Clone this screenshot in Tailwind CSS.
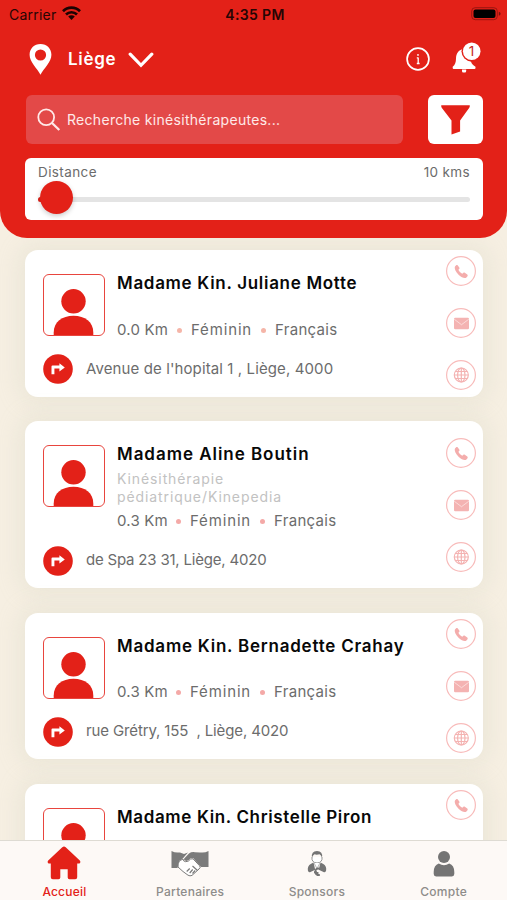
<!DOCTYPE html>
<html lang="fr">
<head>
<meta charset="utf-8">
<title>Kinésithérapeutes</title>
<script src="https://cdn.jsdelivr.net/npm/@tailwindcss/browser@4"></script>
</head>
<body class="bg-[#f6efe2]">
<svg class="hidden">
  <symbol id="person" viewBox="0 0 60 60"><circle cx="29.500" cy="26.300" r="12.200" fill="#e32118"/><path d="M9.700 60v-2.500C9.700 47 18 40.800 29.500 40.800S49.300 47 49.300 57.500V60z" fill="#e32118"/></symbol>
  <symbol id="turn" viewBox="0 0 30 30"><circle cx="15" cy="15" r="14.800" fill="#e32118"/><path d="M8.500 20.300v-7.700q0-1 1-1h6.900V9.200l5.400 4.200-5.400 4.200v-3h-5v5.700z" fill="#fff"/></symbol>
  <symbol id="phone" viewBox="0 0 30 30"><circle cx="15" cy="15" r="14.400" fill="none" stroke="#f8bcbb" stroke-width="1.200"/><path d="M9 10.500c.8-1.200 1.900-2 2.800-1.100l1.500 2.100c.6 1-.1 1.600-.9 2.300.7 1.700 2.200 3.200 4 4 .8-1 1.500-1.600 2.400-1l2.500 1.600c1 .9.200 2-.9 3-1.500 1.300-4.800.2-7.600-2.500S8 12.500 9 10.500z" fill="#f4adac"/></symbol>
  <symbol id="mail" viewBox="0 0 30 30"><circle cx="15" cy="15" r="14.400" fill="none" stroke="#f8bcbb" stroke-width="1.200"/><rect x="8" y="9.800" width="15" height="11.400" rx="1.200" fill="#f4b3b2"/><path d="M8.200 11.200l7.300 5.500 7.300-5.500" fill="none" stroke="#fce4e3" stroke-width=".8"/></symbol>
  <symbol id="globe" viewBox="0 0 30 30"><circle cx="15" cy="15" r="14.400" fill="none" stroke="#f8bcbb" stroke-width="1.200"/><g fill="none" stroke="#f4b3b2" stroke-width="1.200"><circle cx="15.300" cy="15" r="7"/><ellipse cx="15.300" cy="15" rx="3.700" ry="7"/><path d="M15.300 8v14M8.300 15h14M9.300 11.500h12M9.300 18.500h12"/></g></symbol>
</svg>
<div class="relative flex h-[900px] w-[507px] flex-col overflow-hidden font-['Inter',sans-serif]">

  <header class="relative z-10 h-[238px] shrink-0 rounded-b-[27px] bg-[#e32118]">
    <div class="flex h-7 items-center justify-between pr-[6px] pl-[9px] text-[14px] text-[#260504]">
      <div class="flex w-[120px] items-center gap-[6px]">
        <span class="tracking-[0.220px]">Carrier</span>
        <svg class="-mt-[2px] h-[14px] w-[19px]" viewBox="0 0 19 14" fill="none" stroke="#1c0302" stroke-width="2.700"><path d="M1 5.200a12 12 0 0 1 17 0M4 8.500a7.800 7.800 0 0 1 11 0"/><path d="M6.200 10.600a4.700 4.700 0 0 1 6.600 0L9.500 14z" fill="#1c0302" stroke="none"/></svg>
      </div>
      <span class="text-[14px] font-semibold tracking-[0.350px]">4:35 PM</span>
      <div class="flex w-[120px] justify-end">
        <svg class="h-[14px] w-[30px]" viewBox="0 0 30 14"><rect x=".7" y=".7" width="25.600" height="12" rx="3.500" fill="none" stroke="#9a1610"/><rect x="2.500" y="2.500" width="22" height="8.500" rx="2" fill="#000"/><path d="M27.800 4.800v4q1.800-.5 1.800-2t-1.800-2z" fill="#7a110c"/></svg>
      </div>
    </div>
    <div class="flex h-[67px] items-center pr-[26px] pl-[29px] text-white">
      <svg class="-mt-[5px] h-[31px] w-[23px]" viewBox="0 0 23 31"><path fill-rule="evenodd" d="M11.500 0C5.100 0 .6 4.700.6 10.800c0 7.500 7.400 13.300 10.900 20 3.500-6.700 10.900-12.500 10.900-20C22.400 4.700 17.900 0 11.500 0zm0 5.400a5.600 5.600 0 1 1 0 11.200 5.600 5.600 0 0 1 0-11.200z" fill="#fff"/></svg>
      <span class="-mt-[3px] ml-4 w-12 text-[17px] font-semibold tracking-[0.700px]">Liège</span>
      <svg class="-mt-[4px] ml-[12px] h-[16px] w-[26px]" viewBox="0 0 26 16"><path d="M2.200 2.200L13 13.300 23.800 2.200" fill="none" stroke="#fff" stroke-width="3.200" stroke-linecap="round"/></svg>
      <svg class="-mt-[5px] ml-auto h-6 w-6" viewBox="0 0 24 24" fill="none" stroke="#fff"><circle cx="12" cy="12" r="10.900" stroke-width="1.700"/><path d="M12.200 10.500V17M10.800 10.800h1.400M10.800 16.500h2.800" stroke-width="1.300"/><circle cx="12" cy="7.900" r=".9" fill="#fff" stroke="none"/></svg>
      <svg class="-mt-[9px] ml-[21px] h-[32px] w-[30px] overflow-visible" viewBox="0 0 30 32"><path d="M1.700 27v-1.200c2.500-2 3.200-4.200 3.300-8.200.1-4.900 2.700-9 7-9.300C11 13 13 19 20 20.500c.4 2.300 1.900 3.500 4.500 5.300V27q0 1-1 1H2.700q-1 0-1-1zM11 28.500h4.200v1.400q0 1.500-1.300 1.500h-1.600q-1.300 0-1.300-1.500z" fill="#fff"/><circle cx="20.700" cy="10.200" r="10.200" fill="#e32118"/><circle cx="20.700" cy="10.200" r="8.800" fill="#fff"/><text x="20.500" y="15" text-anchor="middle" font-family="Inter" font-size="13.500" fill="#c62a22">1</text></svg>
    </div>
    <div class="flex justify-between pr-[24px] pl-[26px]">
      <div class="flex h-[49px] w-[377px] items-center rounded-md bg-[#e34948] pl-[11px]">
        <svg class="h-[24px] w-[24px]" viewBox="0 0 24 24" fill="none" stroke="#ffe9e8" stroke-width="1.800"><circle cx="9.200" cy="9.200" r="7.900"/><path d="M15 15l7.300 7" stroke-width="2.300"/></svg>
        <span class="ml-[6px] text-[14px] tracking-[0.300px] text-[#ffe9e8]">Recherche kinésithérapeutes...</span>
      </div>
      <div class="flex h-[49px] w-[55px] items-center justify-center rounded-md bg-white">
        <svg class="h-[30px] w-[29px]" viewBox="0 0 29 30"><path d="M.3.300h28.400q.4 1.400-.6 2.600l-9 12.700v10.900L10.500 29.500V15.600L.9 2.900Q0 1.700.3.300z" fill="#e32118"/></svg>
      </div>
    </div>
    <div class="mt-[14px] mr-[24px] ml-[25px] h-[62px] rounded-md bg-white px-[13px] pt-[4px]">
      <div class="flex h-5 items-center justify-between text-[13.500px] text-[#6b6b6b]"><span class="tracking-[0.400px]">Distance</span><span class="tracking-[0.350px]">10 kms</span></div>
      <div class="flex h-[34px] items-center">
        <div class="relative h-[5px] w-full rounded-full bg-[#e4e4e4]">
          <div class="absolute top-0 left-0 h-[5px] w-4 rounded-full bg-[#e32118]"></div>
          <div class="absolute -top-[16px] left-[2px] h-[33px] w-[33px] rounded-full bg-[#e32118] shadow-[0_2px_5px_rgba(0,0,0,0.2)]"></div>
        </div>
      </div>
    </div>
  </header>

  <main class="flex flex-col gap-[24.500px] pt-[12px] pr-[24px] pl-[25px] text-[#6c6c6c]">
    <article class="flex h-[146.500px] shrink-0 rounded-[13px] bg-white pr-[7px] pl-[18px] shadow-[0_0_22px_5px_rgba(200,205,185,0.26)]">
      <div class="flex-1">
        <div class="flex">
          <div class="mt-6 h-[62px] w-[62px] overflow-hidden rounded-[6px] border border-[#e8453e]"><svg class="h-[60px] w-[60px]"><use href="#person"/></svg></div>
          <div class="ml-[12px] pt-[21px]">
            <h2 class="h-6 text-[17px] leading-6 font-semibold tracking-[0.700px] whitespace-nowrap text-[#080808]">Madame Kin. Juliane Motte</h2>
            <div class="h-[25px]"></div>
            <div class="flex h-5 items-center text-[15px] tracking-[0.200px]"><span class="w-[60px]">0.0 Km</span><i class="mr-[9px] h-[5px] w-[5px] rounded-full bg-[#f5b5a8]"></i><span class="w-[70px] tracking-[0.850px]">Féminin</span><i class="mr-[9px] h-[5px] w-[5px] rounded-full bg-[#f5b5a8]"></i><span class="tracking-[0.300px]">Français</span></div>
          </div>
        </div>
        <div class="mt-[14px] flex h-[30px] items-center"><svg class="mr-[13px] h-[30px] w-[30px]"><use href="#turn"/></svg><span class="text-[15px] tracking-[0.110px] whitespace-nowrap">Avenue de l'hopital 1 , Liège, 4000</span></div>
      </div>
      <div class="flex flex-col justify-center gap-[22px]"><svg class="h-[30px] w-[30px]"><use href="#phone"/></svg><svg class="h-[30px] w-[30px]"><use href="#mail"/></svg><svg class="h-[30px] w-[30px]"><use href="#globe"/></svg></div>
    </article>

    <article class="flex h-[167px] shrink-0 rounded-[13px] bg-white pr-[7px] pl-[18px] shadow-[0_0_22px_5px_rgba(200,205,185,0.26)]">
      <div class="flex-1">
        <div class="flex">
          <div class="mt-6 h-[62px] w-[62px] overflow-hidden rounded-[6px] border border-[#e8453e]"><svg class="h-[60px] w-[60px]"><use href="#person"/></svg></div>
          <div class="ml-[12px] pt-[21px]">
            <h2 class="h-6 text-[17px] leading-6 font-semibold tracking-[0.960px] whitespace-nowrap text-[#080808]">Madame Aline Boutin</h2>
            <div class="h-[45.500px] pt-1 text-[14px] leading-[17.500px] tracking-[0.900px] text-[#c2c2c2]">Kinésithérapie<br>pédiatrique/Kinepedia</div>
            <div class="flex h-5 items-center text-[15px] tracking-[0.200px]"><span class="w-[59px]">0.3 Km</span><i class="mr-[9px] h-[5px] w-[5px] rounded-full bg-[#f4a9a7]"></i><span class="w-[70px] tracking-[0.850px]">Féminin</span><i class="mr-[9px] h-[5px] w-[5px] rounded-full bg-[#f4a9a7]"></i><span class="tracking-[0.300px]">Français</span></div>
          </div>
        </div>
        <div class="mt-[14px] flex h-[30px] items-center"><svg class="mr-[13px] h-[30px] w-[30px]"><use href="#turn"/></svg><span class="text-[15px] tracking-[-0.200px] whitespace-nowrap">de Spa 23 31, Liège, 4020</span></div>
      </div>
      <div class="flex flex-col justify-center gap-[22px]"><svg class="h-[30px] w-[30px]"><use href="#phone"/></svg><svg class="h-[30px] w-[30px]"><use href="#mail"/></svg><svg class="h-[30px] w-[30px]"><use href="#globe"/></svg></div>
    </article>

    <article class="flex h-[146.500px] shrink-0 rounded-[13px] bg-white pr-[7px] pl-[18px] shadow-[0_0_22px_5px_rgba(200,205,185,0.26)]">
      <div class="flex-1">
        <div class="flex">
          <div class="mt-6 h-[62px] w-[62px] overflow-hidden rounded-[6px] border border-[#e8453e]"><svg class="h-[60px] w-[60px]"><use href="#person"/></svg></div>
          <div class="ml-[12px] pt-[21px]">
            <h2 class="h-6 text-[17px] leading-6 font-semibold tracking-[0.770px] whitespace-nowrap text-[#080808]">Madame Kin. Bernadette Crahay</h2>
            <div class="h-[25px]"></div>
            <div class="flex h-5 items-center text-[15px] tracking-[0.200px]"><span class="w-[59px]">0.3 Km</span><i class="mr-[9px] h-[5px] w-[5px] rounded-full bg-[#f4a9a7]"></i><span class="w-[70px] tracking-[0.850px]">Féminin</span><i class="mr-[9px] h-[5px] w-[5px] rounded-full bg-[#f4a9a7]"></i><span class="tracking-[0.300px]">Français</span></div>
          </div>
        </div>
        <div class="mt-[14px] flex h-[30px] items-center"><svg class="mr-[13px] h-[30px] w-[30px]"><use href="#turn"/></svg><span class="text-[15px] tracking-[-0.130px] whitespace-nowrap">rue Grétry, 155&nbsp; , Liège, 4020</span></div>
      </div>
      <div class="flex flex-col justify-center gap-[22px]"><svg class="h-[30px] w-[30px]"><use href="#phone"/></svg><svg class="h-[30px] w-[30px]"><use href="#mail"/></svg><svg class="h-[30px] w-[30px]"><use href="#globe"/></svg></div>
    </article>

    <article class="flex h-[146.500px] shrink-0 rounded-[13px] bg-white pr-[7px] pl-[18px] shadow-[0_0_22px_5px_rgba(200,205,185,0.26)]">
      <div class="flex flex-1">
        <div class="mt-6 h-[62px] w-[62px] overflow-hidden rounded-[6px] border border-[#e8453e]"><svg class="h-[60px] w-[60px]"><use href="#person"/></svg></div>
        <h2 class="mt-[21px] ml-[12px] h-6 text-[17px] leading-6 font-semibold tracking-[0.640px] whitespace-nowrap text-[#080808]">Madame Kin. Christelle Piron</h2>
      </div>
      <svg class="mt-[6px] h-[30px] w-[30px]"><use href="#phone"/></svg>
    </article>
  </main>

  <nav class="absolute inset-x-0 bottom-0 z-20 grid h-[60px] grid-cols-4 border-t border-[#dedbd3] bg-[#fdf9f6] text-center text-[12px] font-medium text-[#8e8c8a]">
    <div class="flex flex-col items-center pl-[2px] text-[#e32118]">
      <svg class="mt-[5px] h-[34px] w-[34px]" viewBox="0 0 34 34"><path d="M15.300 1.300q1.700-1.500 3.400 0L32.800 14.500q1.300 1.600-.3 3H30.200V31.300q0 2-2 2h-5.700q-1.800 0-1.800-1.800V23.200h-7.400v8.300q0 1.800-1.800 1.800H5.800q-2 0-2-2V17.500H1.500q-1.600-1.400-.3-3z" fill="#e32118"/></svg>
      <span class="mt-[3px] leading-[18px] tracking-[0.200px]">Accueil</span>
    </div>
    <div class="flex flex-col items-center">
      <svg class="mt-[9px] h-[27px] w-[38px]" viewBox="0 0 38 27"><path d="M.5 1q4 2.200 8.500 1.400L13 4l4-1.600-5.200 6.200-3.300 2.200L6.500 18H.5zM37.500 1q-4 2.200-8.500 1.400L24 2.200q-3.500-.5-6 1.200l-4.800 5.200q-.7 2 2 2.300 3-.5 4.300-2.600L22 8l8 9h7.500z" fill="#7b7b7b"/><path d="M8.500 10.700q-1.800 3-1.500 6.300l5 4.500 5 3.700q2 1.200 4 .2l7-6.400q2.300-1.700.5-3.300L22 8.800l-2.400.2q-2 2.800-5 2.700-2.500-.3-2.500-2.600z" fill="#fff" stroke="#7b7b7b" stroke-width="1"/><path d="M15.700 21.500l3-3M18.700 23l3-3.500M21.500 23.500l2.700-3M21.500 16l5 4.500" stroke="#7b7b7b" stroke-width="1.200" fill="none"/></svg>
      <span class="mt-[6px] leading-[18px] tracking-[0.250px]">Partenaires</span>
    </div>
    <div class="flex flex-col items-center">
      <svg class="mt-[9px] h-[27px] w-[20px]" viewBox="0 0 20 27"><path d="M5 7q-.8 5.500 5 6 5.800-.5 5-6" fill="#fff" stroke="#8a8a8a" stroke-width=".9"/><path d="M5 7.500Q4 1 10 1t5 6.500q-1.400-3-2.500-3.200-3 .8-5 0Q6 5 5 7.500z" fill="#747474"/><path d="M6.500 12.500Q1 14.500.8 18.500T3 22.200l5.200-2.500zM13.500 12.500Q19 14.500 19.200 18.500T17 22.200l-5.200-2.500z" fill="#747474"/><path d="M7 13l3 5.500 3-5.500" fill="#fff" stroke="#999" stroke-width=".7"/><path d="M12.500 18.500q-4-.5-4.200 3.300.3 3.500 4.500 3.200M7 22.300h3M10.500 22v4" fill="none" stroke="#747474" stroke-width="1.900"/></svg>
      <span class="mt-[6px] leading-[18px] tracking-[0.250px]">Sponsors</span>
    </div>
    <div class="flex flex-col items-center">
      <svg class="mt-[10px] h-[26px] w-[22px]" viewBox="0 0 22 26"><circle cx="11" cy="6" r="6" fill="#747474"/><path d="M5.800 12.600Q11 15.700 16.200 12.600 21.300 14.500 21.300 21v2q0 2.400-2.400 2.400H3.100Q.7 25.400.7 23v-2Q.7 14.500 5.800 12.600z" fill="#747474"/></svg>
      <span class="mt-[6px] leading-[18px] tracking-[0.300px]">Compte</span>
    </div>
  </nav>
</div>
</body>
</html>
